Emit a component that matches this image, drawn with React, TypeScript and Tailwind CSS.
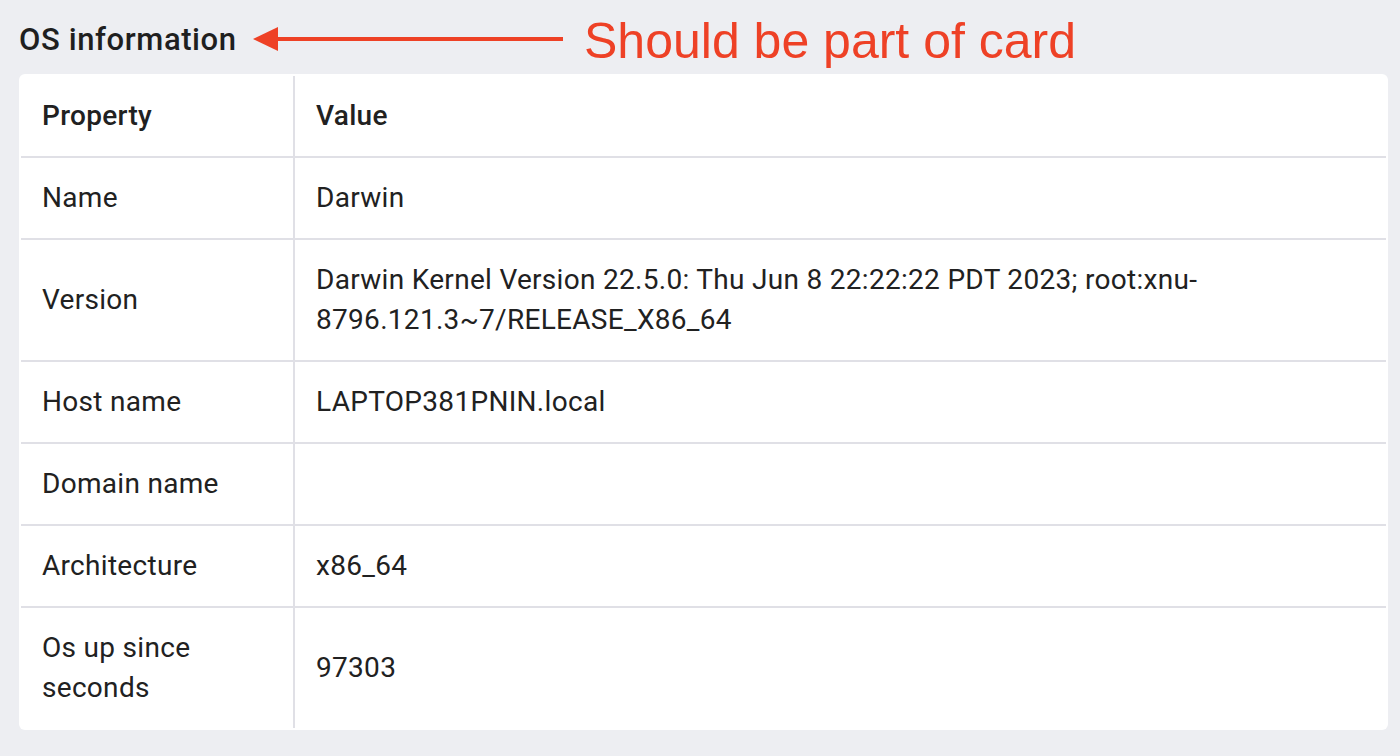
import React from 'react';

interface Row {
  property: string;
  value: string;
}

const rows: Row[] = [
  { property: 'Name', value: 'Darwin' },
  {
    property: 'Version',
    value: 'Darwin Kernel Version 22.5.0: Thu Jun 8 22:22:22 PDT 2023; root:xnu-8796.121.3~7/RELEASE_X86_64',
  },
  { property: 'Host name', value: 'LAPTOP381PNIN.local' },
  { property: 'Domain name', value: '' },
  { property: 'Architecture', value: 'x86_64' },
  { property: 'Os up since seconds', value: '97303' },
];

const App: React.FC = () => {
  return (
    <div
      className="relative min-h-[756px] w-[1400px] bg-[#edeef2] px-[19px] text-[#212121]"
      style={{ fontFamily: 'Roboto, "Noto Sans", sans-serif' }}
    >
      <h2 className="pt-[20px] pb-[14px] text-[31px] leading-[40px] font-medium tracking-[0.6px] text-[#1f1f1f]">
        OS information
      </h2>

      {/* annotation */}
      <div className="pointer-events-none absolute left-[253px] top-[27px] flex items-center">
        <svg width="312" height="24" viewBox="0 0 312 24">
          <polygon points="0,12 25,0 25,24" fill="#ee4126" />
          <rect x="24" y="10" width="286" height="4" fill="#ee4126" />
        </svg>
      </div>
      <div
        className="pointer-events-none absolute left-[584px] top-[12px] text-[50px] leading-[58px] text-[#ee4126]"
        style={{ fontFamily: '"Liberation Sans", Arial, sans-serif' }}
      >
        Should be part of card
      </div>

      <div className="w-[1369px] rounded-[6px] bg-white p-[2px]">
        <table className="w-full border-collapse text-left text-[28px] leading-[40px] tracking-[0.3px]">
          <thead>
            <tr className="border-b-2 border-[#e0e0e6]">
              <th className="w-[273px] border-r-2 border-[#e0e0e6] px-[21px] py-[20px] font-medium">Property</th>
              <th className="px-[21px] py-[20px] font-medium">Value</th>
            </tr>
          </thead>
          <tbody>
            {rows.map((row, i) => (
              <tr
                key={row.property}
                className={i < rows.length - 1 ? 'border-b-2 border-[#e0e0e6]' : ''}
              >
                <td className="w-[273px] border-r-2 border-[#e0e0e6] px-[21px] py-[20px] align-middle font-normal">
                  {row.property === 'Os up since seconds' ? (
                    <span className="block w-[170px]">{row.property}</span>
                  ) : (
                    row.property
                  )}
                </td>
                <td className="h-[80px] px-[21px] py-[20px] align-middle font-normal">{row.value}</td>
              </tr>
            ))}
          </tbody>
        </table>
      </div>
    </div>
  );
};

export default App;
